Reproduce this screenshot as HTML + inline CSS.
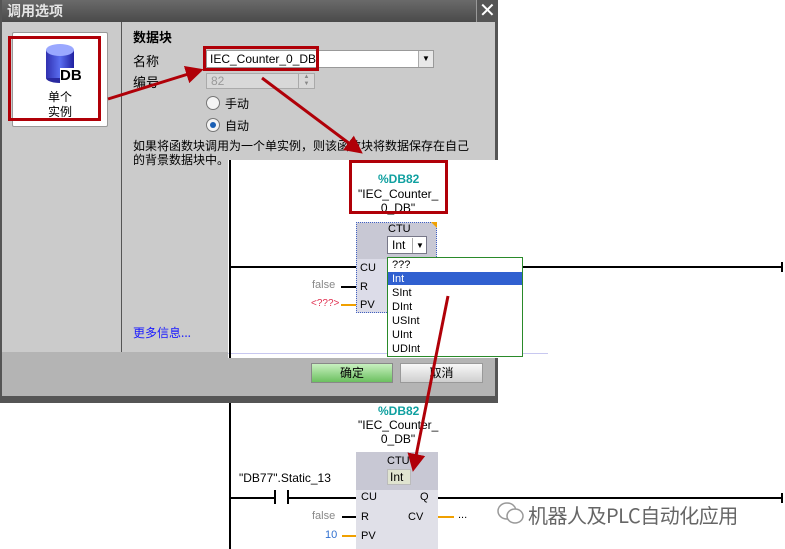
<!DOCTYPE html>
<html><head><meta charset="utf-8"><style>
*{margin:0;padding:0;box-sizing:border-box}
body{width:785px;height:549px;background:#fff;position:relative;overflow:hidden;font-family:"Liberation Sans","Noto Sans CJK SC",sans-serif;font-size:12px;color:#000}
.a{position:absolute}
.cn{font-family:"Noto Sans CJK SC","WenQuanYi Zen Hei",sans-serif}
.hl{background:#000;height:2px}
.vl{background:#000;width:2px}
</style></head><body>
<!-- dialog -->
<div class="a" style="left:0;top:0;width:498px;height:403px;background:#555"></div>
<div class="a" style="left:2px;top:0;width:474px;height:22px;background:linear-gradient(#6a6a6a,#4a4a4a)"></div>
<div class="a cn" style="left:7px;top:1px;color:#e4e4e4;font-size:14px;font-weight:bold">调用选项</div>
<div class="a" style="left:476px;top:0;width:21px;height:22px;background:#555;border-left:1px solid #999"></div>
<div class="a" style="left:479px;top:0px;color:#fff;font-size:20px;line-height:22px">✕</div>
<div class="a" style="left:2px;top:22px;width:119px;height:330px;background:#cbcbcb"></div>
<div class="a" style="left:122px;top:22px;width:373px;height:330px;background:#cbcbcb"></div>
<div class="a" style="left:2px;top:352px;width:493px;height:44px;background:#b4b4b4"></div>
<!-- icon card -->
<div class="a" style="left:12px;top:32px;width:96px;height:95px;background:#fff;border:1px solid #999;border-radius:2px"></div>
<svg class="a" style="left:44px;top:42px" width="40" height="44"><ellipse cx="16" cy="36" rx="14" ry="5" fill="#2a2aa0"/><rect x="2" y="8" width="28" height="28" fill="url(#g)"/><ellipse cx="16" cy="8" rx="14" ry="6" fill="#9aa8ff"/><defs><linearGradient id="g"><stop offset="0" stop-color="#3030b0"/><stop offset=".5" stop-color="#5a6ef0"/><stop offset="1" stop-color="#2020a0"/></linearGradient></defs></svg>
<div class="a" style="left:60px;top:68px;font-size:15px;font-weight:bold;background:#fff;line-height:16px">DB</div>
<div class="a cn" style="left:46px;top:89px;font-size:12px;line-height:15px;text-align:center;width:28px">单个<br>实例</div>
<div class="a" style="left:8px;top:36px;width:93px;height:85px;border:3px solid #b00008"></div>
<!-- right content -->
<div class="a cn" style="left:133px;top:27px;font-weight:bold;font-size:13px">数据块</div>
<div class="a cn" style="left:133px;top:51px;font-size:13px">名称</div>
<div class="a cn" style="left:133px;top:72px;font-size:13px">编号</div>
<div class="a" style="left:206px;top:50px;width:228px;height:18px;background:#fff;border:1px solid #999"></div>
<div class="a" style="left:418px;top:51px;width:15px;height:16px;background:#e8e8e8;border-left:1px solid #aaa;font-size:8px;text-align:center;line-height:16px">▼</div>
<div class="a" style="left:210px;top:52px;font-size:12px">IEC_Counter_0_DB</div>
<div class="a" style="left:203px;top:46px;width:116px;height:25px;border:3px solid #b00008"></div>
<div class="a" style="left:206px;top:73px;width:109px;height:16px;background:#d8d8d8;border:1px solid #aaa;color:#999;padding-left:4px;line-height:14px">82</div>
<div class="a" style="left:298px;top:74px;width:16px;height:14px;border-left:1px solid #aaa;font-size:6px;color:#888;line-height:7px;text-align:center">▲<br>▼</div>
<div class="a" style="left:206px;top:96px;width:14px;height:14px;border-radius:50%;background:#f4f4f4;border:1px solid #777"></div>
<div class="a cn" style="left:225px;top:95px;font-size:12px">手动</div>
<div class="a" style="left:206px;top:118px;width:14px;height:14px;border-radius:50%;background:#f4f4f4;border:1px solid #777"></div>
<div class="a" style="left:210px;top:122px;width:6px;height:6px;border-radius:50%;background:#1a5fb4"></div>
<div class="a cn" style="left:225px;top:117px;font-size:12px">自动</div>
<div class="a cn" style="left:133px;top:139px;font-size:12px;line-height:14px;width:345px">如果将函数块调用为一个单实例，则该函数块将数据保存在自己<br>的背景数据块中。</div>
<div class="a cn" style="left:133px;top:324px;font-size:12px;color:#1a1aff">更多信息...</div>
<!-- buttons -->
<div class="a cn" style="left:311px;top:363px;width:82px;height:20px;border:1px solid #888;background:linear-gradient(#c8f0c0,#6cc060);text-align:center;line-height:18px;font-size:12px">确定</div>
<div class="a cn" style="left:400px;top:363px;width:83px;height:20px;border:1px solid #999;background:linear-gradient(#f8f8f8,#cfcfcf);text-align:center;line-height:18px;font-size:12px">取消</div>
<!-- white overlay -->
<div class="a" style="left:228px;top:160px;width:320px;height:198px;background:#fff"></div>
<div class="a" style="left:228px;top:353px;width:320px;height:1px;background:#c8c8f0"></div>
<!-- ladder lines -->
<div class="a vl" style="left:229px;top:160px;height:198px"></div>
<div class="a vl" style="left:229px;top:403px;height:146px"></div>
<div class="a hl" style="left:230px;top:266px;width:128px"></div>
<div class="a hl" style="left:520px;top:266px;width:262px"></div>
<div class="a" style="left:781px;top:262px;width:2px;height:10px;background:#000"></div>
<!-- top block -->
<div class="a" style="left:378px;top:172px;color:#10a0a0;font-weight:bold;font-size:12px">%DB82</div>
<div class="a" style="left:358px;top:187px;font-size:12px;line-height:14px;text-align:center;width:80px">"IEC_Counter_<br>0_DB"</div>
<div class="a" style="left:349px;top:160px;width:99px;height:54px;border:3px solid #b00008"></div>
<div class="a" style="left:356px;top:222px;width:81px;height:91px;background:#dcdce8;border:1px dotted #4060c0"></div>
<div class="a" style="left:357px;top:223px;width:79px;height:36px;background:#c8c8d4"></div>
<div class="a" style="left:388px;top:223px;font-size:11px">CTU</div>
<div class="a" style="left:387px;top:236px;width:40px;height:18px;background:#fff;border:1px solid #778"></div>
<div class="a" style="left:392px;top:238px;font-size:12px">Int</div>
<div class="a" style="left:412px;top:238px;font-size:8px;border-left:1px solid #aaa;padding:3px 3px">▼</div>
<div class="a" style="left:431px;top:222px;width:0;height:0;border-left:6px solid transparent;border-top:6px solid #f0a000"></div>
<div class="a" style="left:360px;top:262px;font-size:11px">CU</div>
<div class="a" style="left:360px;top:281px;font-size:11px">R</div>
<div class="a" style="left:360px;top:299px;font-size:11px">PV</div>
<div class="a" style="left:312px;top:279px;color:#888;font-size:11px">false</div>
<div class="a hl" style="left:341px;top:286px;width:15px"></div>
<div class="a" style="left:311px;top:298px;color:#e03050;font-size:10px">&lt;???&gt;</div>
<div class="a" style="left:341px;top:304px;width:15px;height:2px;background:#f0a000"></div>
<!-- dropdown -->
<div class="a" style="left:387px;top:257px;width:136px;height:100px;background:#fff;border:1px solid #2a8a2a"></div>
<div class="a" style="left:388px;top:272px;width:134px;height:13px;background:#3060d0"></div>
<div class="a" style="left:392px;top:258px;font-size:11px;line-height:14px">???<br><span style="color:#fff">Int</span><br>SInt<br>DInt<br>USInt<br>UInt<br>UDInt</div>
<!-- bottom block -->
<div class="a" style="left:378px;top:404px;color:#10a0a0;font-weight:bold;font-size:12px">%DB82</div>
<div class="a" style="left:358px;top:418px;font-size:12px;line-height:14px;text-align:center;width:80px">"IEC_Counter_<br>0_DB"</div>
<div class="a" style="left:356px;top:452px;width:82px;height:97px;background:#e0e0e8"></div>
<div class="a" style="left:356px;top:452px;width:82px;height:38px;background:#c8c8d4"></div>
<div class="a" style="left:387px;top:455px;font-size:11px">CTU</div>
<div class="a" style="left:387px;top:469px;width:24px;height:16px;background:#e0e4d0;border:1px solid #bbb;font-size:12px;padding-left:2px">Int</div>
<div class="a" style="left:239px;top:471px;font-size:12px">"DB77".Static_13</div>
<div class="a hl" style="left:230px;top:497px;width:46px"></div>
<div class="a" style="left:274px;top:490px;width:2px;height:14px;background:#000"></div>
<div class="a" style="left:287px;top:490px;width:2px;height:14px;background:#000"></div>
<div class="a hl" style="left:289px;top:497px;width:67px"></div>
<div class="a hl" style="left:438px;top:497px;width:344px"></div>
<div class="a" style="left:781px;top:493px;width:2px;height:10px;background:#000"></div>
<div class="a" style="left:361px;top:491px;font-size:11px">CU</div>
<div class="a" style="left:361px;top:511px;font-size:11px">R</div>
<div class="a" style="left:361px;top:530px;font-size:11px">PV</div>
<div class="a" style="left:420px;top:491px;font-size:11px">Q</div>
<div class="a" style="left:408px;top:511px;font-size:11px">CV</div>
<div class="a" style="left:312px;top:510px;color:#888;font-size:11px">false</div>
<div class="a hl" style="left:342px;top:516px;width:14px"></div>
<div class="a" style="left:325px;top:529px;color:#3070d0;font-size:11px">10</div>
<div class="a" style="left:342px;top:535px;width:14px;height:2px;background:#f0a000"></div>
<div class="a" style="left:438px;top:516px;width:16px;height:2px;background:#f0a000"></div>
<div class="a" style="left:458px;top:509px;font-size:11px">...</div>
<!-- watermark -->
<svg class="a" style="left:496px;top:500px" width="30" height="26"><ellipse cx="11" cy="11" rx="9" ry="8" fill="none" stroke="#999" stroke-width="1.5"/><ellipse cx="19" cy="16" rx="8" ry="7" fill="#fff" stroke="#999" stroke-width="1.5"/></svg>
<div class="a cn" style="left:528px;top:500px;font-size:20px;letter-spacing:-0.5px;color:#666">机器人及PLC自动化应用</div>
<!-- arrows -->
<svg class="a" style="left:0;top:0" width="785" height="549">
<defs><marker id="m" markerWidth="6" markerHeight="6" refX="4" refY="3" orient="auto"><path d="M0,0 L6,3 L0,6 Z" fill="#b00008"/></marker></defs>
<g stroke="#b00008" stroke-width="3" fill="none">
<line x1="108" y1="99" x2="198" y2="71" marker-end="url(#m)"/>
<line x1="262" y1="78" x2="358" y2="150" marker-end="url(#m)"/>
<line x1="448" y1="296" x2="414" y2="466" marker-end="url(#m)"/>
</g></svg>
</body></html>
